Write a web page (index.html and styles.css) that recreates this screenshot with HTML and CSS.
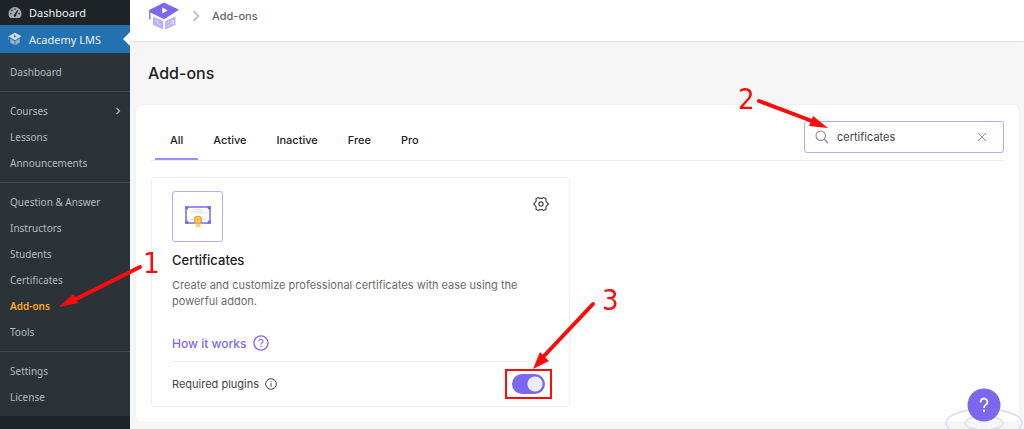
FILE: index.html
```html
<!DOCTYPE html>
<html lang="en">
<head>
    <meta charset="UTF-8">
    <meta name="viewport" content="width=device-width, initial-scale=1.0">
    <title>Add-ons - Academy LMS</title>
    <link rel="stylesheet" href="styles.css">
</head>
<body>
    <div class="layout">
        <nav class="sidebar">
            <a href="#" class="menu-item">
                <svg class="menu-icon" viewBox="0 0 14 14">
                    <path d="M2.2 12A6.5 6.5 0 1 1 11.8 12Z" fill="#a7aaad"/>
                    <g fill="#1d2327">
                        <circle cx="7" cy="3" r="0.8"/>
                        <circle cx="3.9" cy="4.4" r="0.8"/>
                        <circle cx="2.8" cy="7.6" r="0.8"/>
                        <circle cx="11.2" cy="7.6" r="0.8"/>
                        <path d="M9.6 3.8L10.3 4.3L8.2 9A1.3 1.3 0 1 1 6.4 8.2Z"/>
                    </g>
                </svg>
                Dashboard
            </a>
            <a href="#" class="menu-item current">
                <svg class="menu-icon" viewBox="0 0 14 14">
                    <path d="M7 0.8L13.6 4.2L7 8.2L0.4 4.2Z" fill="#d5dbe1"/>
                    <path d="M6 3L8.6 4.3L6 5.6Z" fill="#2271b1"/>
                    <path d="M0.7 4.5V8M2.5 7V10.5L6.3 12.6V9.2ZM11.5 7V10.5L7.7 12.6V9.2Z" fill="#93b3d2" stroke="#93b3d2" stroke-width="0.6"/>
                </svg>
                Academy LMS
            </a>
            <div class="submenu">
                <ul>
                    <li><a href="#">Dashboard</a></li>
                </ul>
                <ul>
                    <li><a href="#">Courses
                        <svg class="menu-arrow" viewBox="0 0 6 8"><path d="M1.5 1L4.5 4L1.5 7" fill="none" stroke="currentColor" stroke-width="1.2"/></svg>
                    </a></li>
                    <li><a href="#">Lessons</a></li>
                    <li><a href="#">Announcements</a></li>
                </ul>
                <ul>
                    <li><a href="#">Question &amp; Answer</a></li>
                    <li><a href="#">Instructors</a></li>
                    <li><a href="#">Students</a></li>
                    <li><a href="#">Certificates</a></li>
                    <li><a href="#" class="selected">Add-ons</a></li>
                    <li><a href="#">Tools</a></li>
                </ul>
                <ul>
                    <li><a href="#">Settings</a></li>
                    <li><a href="#">License</a></li>
                </ul>
            </div>
        </nav>

        <div class="main">
            <header class="topbar">
                <a href="#" class="logo" aria-label="Academy LMS">
                    <svg viewBox="0 0 30 28">
                        <path d="M4 14.5L14.2 19V27.5L4 22.8Z" fill="#b9affa"/>
                        <path d="M26.5 14.5L16.2 19V27.5L26.5 22.8Z" fill="#b9affa"/>
                        <path d="M6.5 18.2L8.5 19.1V21.6L11.5 23M18.5 20.8L21 19.7M18.5 23.8L21 22.7M22.8 18.8L24.5 18.1V21.5L22.8 22.2Z" fill="none" stroke="#fff" stroke-width="0.6"/>
                        <path d="M15 0.5L30 7.7L15 17.3L1.5 10.5V17.5H0.2V8Z" fill="#7b68ee"/>
                        <path d="M13.3 5.6L18.6 8.6L13.3 11.6Z" fill="#fff"/>
                    </svg>
                </a>
                <svg class="crumb-arrow" viewBox="0 0 8 12"><path d="M1.5 1L6.5 6L1.5 11" fill="none" stroke="#b0b0b0" stroke-width="1.4"/></svg>
                <span class="crumb">Add-ons</span>
            </header>

            <h1>Add-ons</h1>

            <main class="panel">
                <div class="toolbar">
                    <div class="tabs">
                        <button type="button" class="tab active">All</button>
                        <button type="button" class="tab">Active</button>
                        <button type="button" class="tab">Inactive</button>
                        <button type="button" class="tab">Free</button>
                        <button type="button" class="tab">Pro</button>
                    </div>
                    <div class="search">
                        <svg class="search-icon" viewBox="0 0 14 14"><circle cx="5.7" cy="5.7" r="4.7" fill="none" stroke="#8c8c8c" stroke-width="1.1"/><path d="M9 9L13 13" stroke="#8c8c8c" stroke-width="1.3"/></svg>
                        <input type="text" value="certificates" aria-label="Search add-ons">
                        <button type="button" class="clear" aria-label="Clear search">
                            <svg viewBox="0 0 10 10"><path d="M1 1L9 9M9 1L1 9" stroke="#999" stroke-width="1"/></svg>
                        </button>
                    </div>
                </div>

                <div class="cards">
                    <article class="card">
                        <div class="card-top">
                            <div class="card-icon">
                                <svg viewBox="0 0 26 24">
                                    <rect x="1" y="2" width="24" height="16" fill="#fff" stroke="#8474f0" stroke-width="1.6"/>
                                    <path d="M0.2 1.2H3.4A2.4 2.4 0 0 1 0.2 4.4ZM25.8 1.2H22.6A2.4 2.4 0 0 0 25.8 4.4ZM0.2 18.8H3.4A2.4 2.4 0 0 0 0.2 15.6ZM25.8 18.8H22.6A2.4 2.4 0 0 1 25.8 15.6Z" fill="#7b68ee"/>
                                    <path d="M9 4.5H17M7 6.2H19M5 8H21M5 14.5H8.5M18 14.5H21" stroke="#e3e1f8" stroke-width="1"/>
                                    <path d="M10.6 17.5L10.8 23L13 21.6L15.6 23.3L15.2 17.5Z" fill="#fbd07b"/>
                                    <circle cx="13" cy="14.8" r="3.4" fill="#fbd07b" stroke="#eda323" stroke-width="1.4"/>
                                    <path d="M13 13V16.6M11.2 14.8H14.8" stroke="#eda323" stroke-width="0.7"/>
                                </svg>
                            </div>
                            <button type="button" class="gear" aria-label="Add-on settings">
                                <svg viewBox="0 0 16 16" fill="none" stroke="#4a4a4a" stroke-width="1.2" stroke-linejoin="round">
                                    <path d="M5.2 1.4L7 2.4H9L10.8 1.4L13 2.7L12.8 4.7L13.8 6.4L15.3 8L13.8 9.6L12.8 11.3L13 13.3L10.8 14.6L9 13.6H7L5.2 14.6L3 13.3L3.2 11.3L2.2 9.6L0.7 8L2.2 6.4L3.2 4.7L3 2.7Z"/>
                                    <circle cx="8" cy="8" r="2.1"/>
                                </svg>
                            </button>
                        </div>
                        <h2>Certificates</h2>
                        <p class="description">Create and customize professional certificates with ease using the powerful addon.</p>
                        <a href="#" class="how">How it works
                            <svg viewBox="0 0 16 16" fill="none" stroke="currentColor"><circle cx="8" cy="8" r="7.1" stroke-width="1.3"/><path d="M6 6.3A2 2 0 1 1 8.8 8.1Q8 8.5 8 9.5" stroke-width="1.1"/><path d="M8 10.8V12" stroke-width="1.2"/></svg>
                        </a>
                        <div class="card-footer">
                            <label for="certificates-toggle">Required plugins
                                <svg viewBox="0 0 12 12" fill="none" stroke="currentColor"><circle cx="6" cy="6" r="5.3"/><path d="M6 5.2V8.8M6 3.2V4.2"/></svg>
                            </label>
                            <input type="checkbox" role="switch" id="certificates-toggle" class="toggle" checked>
                        </div>
                    </article>
                </div>
            </main>
        </div>
    </div>

    <button type="button" class="help" aria-label="Help">
        <svg viewBox="0 0 78 42">
            <g fill="none" stroke="#d9d4fa" stroke-width="1.3">
                <ellipse cx="39" cy="36" rx="38" ry="14"/>
                <ellipse cx="39" cy="36" rx="19" ry="7"/>
            </g>
            <circle cx="39" cy="18" r="16.5" fill="#7b68ee"/>
            <path d="M35.6 15.6V15A3.4 3.4 0 1 1 40.8 17.8Q39 18.8 39 21" fill="none" stroke="#fff" stroke-width="1.8"/>
            <path d="M39 22.8V25" stroke="#fff" stroke-width="2"/>
        </svg>
    </button>

    <!-- numbered steps drawn over the page -->
    <svg class="steps">
        <g stroke="#ff0a0a" stroke-width="4" stroke-linecap="round">
            <path d="M140 267L74 300"/>
            <path d="M759 101L812 121"/>
            <path d="M593 304L543 357"/>
        </g>
        <g fill="#ff0a0a">
            <path d="M59 307L73 294L78 303Z"/>
            <path d="M828 128L809 126L813 116Z"/>
            <path d="M533 369L540 352L549 361Z"/>
        </g>
        <rect x="506" y="370" width="45" height="28" fill="none" stroke="#ff0a0a" stroke-width="2"/>
        <g class="step-number">
            <text x="143" y="273">1</text>
            <text x="738" y="109">2</text>
            <text x="602" y="310">3</text>
        </g>
    </svg>
</body>
</html>
```

FILE: styles.css
```css
* {
    box-sizing: border-box;
}

body {
    margin: 0;
    font-family: Inter, "Liberation Sans", sans-serif;
    font-size: 11px;
    color: #222;
    background-color: #f6f6f6;
    overflow: hidden;
}

a {
    color: inherit;
    text-decoration: none;
}

button {
    padding: 0;
    border: none;
    background: none;
    font: inherit;
    color: inherit;
    cursor: pointer;
}

svg {
    display: block;
}

.layout {
    display: flex;
    min-height: 100vh;
}

/* sidebar */
.sidebar {
    width: 130px;
    flex-shrink: 0;
    background: #1d2327;
    font-family: "Noto Sans", "Open Sans", sans-serif;
}

.menu-item {
    display: flex;
    align-items: center;
    gap: 7px;
    height: 25px;
    padding-left: 8px;
    font-size: 11px;
    color: #f0f0f1;
}

.menu-item.current {
    position: relative;
    height: 28px;
    background: #2271b1;
}

.menu-item.current::after {
    content: "";
    position: absolute;
    right: 0;
    top: 7px;
    border: 7px solid transparent;
    border-right-color: #f6f6f6;
    border-left: none;
}

.menu-icon {
    width: 14px;
    height: 14px;
}

.submenu {
    background: #2c3338;
}

.submenu ul {
    margin: 0;
    padding: 6px 0;
    list-style: none;
}

.submenu ul + ul {
    border-top: 1px solid #464b50;
}

.submenu a {
    display: flex;
    align-items: center;
    justify-content: space-between;
    height: 26px;
    padding: 0 9px 0 10px;
    font-size: 10px;
    color: #b4b9be;
}

.submenu .selected {
    font-weight: 600;
    color: #f9a825;
}

.menu-arrow {
    width: 6px;
    height: 8px;
}

/* main area */
.main {
    flex: 1;
    min-width: 0;
}

.topbar {
    display: flex;
    align-items: center;
    height: 41px;
    padding: 0 19px 10px;
    background: #fff;
    box-shadow: 0 1px 2px rgba(0, 0, 0, 0.1);
}

.logo svg {
    width: 30px;
    height: 28px;
}

.crumb-arrow {
    width: 8px;
    height: 12px;
    margin: 0 12px 0 13px;
}

.crumb {
    font-weight: 500;
    color: #666;
}

h1 {
    margin: 22px 18px;
    font-size: 16px;
    line-height: 20px;
    font-weight: 500;
}

.panel {
    margin: 0 5px 6px 6px;
    padding: 0 15px 15px;
    min-height: 317px;
    background: #fff;
    border-radius: 6px;
    box-shadow: 0 0 2px rgba(0, 0, 0, 0.08);
}

.toolbar {
    display: flex;
    justify-content: space-between;
    align-items: flex-end;
    height: 56px;
    border-bottom: 1px solid #ececec;
}

.tabs {
    display: flex;
    padding-left: 4px;
}

.tab {
    height: 39px;
    padding: 0 15px;
    border-bottom: 2px solid transparent;
    font-weight: 500;
}

.tab.active {
    border-bottom-color: #9d8ff3;
}

.search {
    display: flex;
    align-items: center;
    width: 200px;
    height: 32px;
    margin-bottom: 7px;
    padding: 0 16px 0 10px;
    border: 1px solid #b5abf6;
    border-radius: 3px;
}

.search-icon {
    width: 14px;
    height: 14px;
    flex-shrink: 0;
}

.search input {
    flex: 1;
    min-width: 0;
    padding: 0 8px;
    border: none;
    outline: none;
    background: none;
    font: inherit;
    color: #444;
}

.clear svg {
    width: 10px;
    height: 10px;
}

/* add-on cards */
.cards {
    display: grid;
    grid-template-columns: 1fr 1fr;
    gap: 16px;
    margin-top: 16px;
}

.card {
    padding: 13px 20px 12px;
    border: 1px solid #efefef;
    border-radius: 4px;
}

.card-top {
    display: flex;
    justify-content: space-between;
    align-items: flex-start;
}

.card-icon {
    display: grid;
    place-items: center;
    width: 51px;
    height: 51px;
    border: 1px solid #b5abf6;
    border-radius: 3px;
}

.card-icon svg {
    width: 26px;
    height: 24px;
}

.gear {
    margin-top: 5px;
}

.gear svg {
    width: 16px;
    height: 16px;
}

.card h2 {
    margin: 9px 0 8px;
    font-size: 13px;
    line-height: 18px;
    font-weight: 500;
}

.description {
    margin: 0 0 24px;
    line-height: 16px;
    color: #6b6b6b;
}

.how {
    display: flex;
    align-items: center;
    gap: 7px;
    height: 20px;
    font-size: 12px;
    font-weight: 500;
    color: #7b68ee;
}

.how svg {
    width: 16px;
    height: 16px;
}

.card-footer {
    display: flex;
    align-items: center;
    justify-content: space-between;
    margin-top: 8px;
    padding: 12px 4px 0 0;
    border-top: 1px solid #ececec;
}

.card-footer label {
    display: flex;
    align-items: center;
    gap: 6px;
    color: #444;
}

.card-footer label svg {
    width: 12px;
    height: 12px;
}

.toggle {
    appearance: none;
    width: 33px;
    height: 20px;
    margin: 0;
    border-radius: 10px;
    background: radial-gradient(circle at 23px 10px, #eeecfd 7px, transparent 8px) #7b68ee;
}

.help {
    position: fixed;
    right: 1px;
    bottom: 0;
}

.help svg {
    width: 78px;
    height: 42px;
}

.steps {
    position: absolute;
    top: 0;
    left: 0;
    width: 100%;
    height: 100%;
    pointer-events: none;
}

.step-number {
    font-family: "DejaVu Sans Condensed", "DejaVu Sans", sans-serif;
    font-size: 29px;
    fill: #ff0a0a;
}
```
